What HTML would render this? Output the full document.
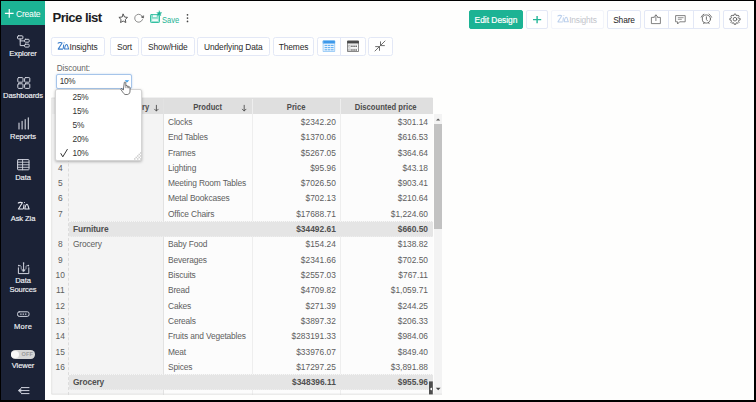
<!DOCTYPE html>
<html><head><meta charset="utf-8">
<style>
*{box-sizing:border-box;margin:0;padding:0}
html,body{width:756px;height:402px;overflow:hidden;background:#000}
body{font-family:"Liberation Sans",sans-serif;position:relative;color:#333}
#app{position:absolute;left:1px;top:1px;width:753px;height:399px;background:#fefefd;overflow:hidden}
#side{position:absolute;left:0;top:0;width:44px;height:399px;background:#1b2236}
#create{position:absolute;left:0;top:0;width:44px;height:24px;background:#1cb394;color:#fff;font-size:8.6px;line-height:24px}
.sl{position:absolute;left:0;width:44px;text-align:center;color:#f4f5f8;font-size:8.1px;line-height:10px;letter-spacing:-0.1px;-webkit-text-stroke:0.15px #f4f5f8;transform:scaleX(.935)}
.abs{position:absolute}
.btn{position:absolute;top:36px;height:18.5px;border:1px solid #e3e8f6;border-radius:2.5px;background:#fff;font-size:8.4px;line-height:18.5px;text-align:center;color:#2a2a2a;letter-spacing:-0.1px;white-space:nowrap}
.tb{position:absolute;top:9px;height:18.5px;border:1px solid #e3e8f6;border-radius:2px;background:#fff;font-size:8.4px;line-height:19px;text-align:center;color:#222;white-space:nowrap;letter-spacing:-0.15px}
.t{position:absolute;font-size:8.4px;line-height:10px;height:10px;color:#5e5e5e;white-space:nowrap;letter-spacing:-0.15px}
.t.n{left:51px;width:16.5px;text-align:center;letter-spacing:0}
.t.r{text-align:right;letter-spacing:0}
.t.b{font-weight:bold;color:#505050}
.sub{position:absolute;left:68px;width:363.5px;height:16.2px;background:#e5e5e5;border-top:1px dotted rgba(255,255,255,.7);border-bottom:1px dotted rgba(255,255,255,.35)}
.h{position:absolute;top:98.8px;height:15.5px;line-height:15.5px;font-size:8.3px;font-weight:bold;color:#4c4c4c;text-align:center}
.h span{display:inline-block;transform:scaleX(.92)}
.opt{position:absolute;left:71.6px;font-size:8.3px;color:#333;line-height:12px;letter-spacing:-0.3px}
</style></head><body>
<div id="app">
 <div id="side">
  <div id="create"><svg class="abs" style="left:0;top:0" width="44" height="24" viewBox="1 1 44 24"><path d="M4.9 13.4h8.7M9.25 9v8.8" stroke="#fff" stroke-width="1.15" fill="none"/></svg><span class="abs" style="left:15px;top:1px;letter-spacing:-0.25px">Create</span></div>
  
  <svg class="abs" style="left:0;top:0" width="44" height="399" viewBox="1 1 44 399" fill="none" stroke="#d3d6e0" stroke-width="1" stroke-linecap="round" stroke-linejoin="round">
   <!-- explorer -->
   <rect x="17.5" y="35.8" width="5.4" height="3.1" rx="0.9"/>
   <path d="M20.2 39v6.6h4.2M20.2 40.9h4.2"/>
   <rect x="24.6" y="39.3" width="4.6" height="2.9" rx="0.9"/>
   <rect x="24.6" y="44.2" width="4.6" height="2.9" rx="0.9"/>
   <!-- dashboards -->
   <rect x="17.8" y="77.6" width="5.2" height="4.6" rx="0.9"/>
   <rect x="24.6" y="77.6" width="5.2" height="4.6" rx="0.9"/>
   <rect x="17.8" y="83.800" width="5.2" height="4.6" rx="0.9"/>
   <rect x="24.6" y="83.800" width="5.2" height="4.6" rx="0.9"/>
   <!-- reports -->
   <path d="M19 123v6M22.1 121.2v7.8M25.2 119.6v9.4M28.3 117.8v11.2" stroke-width="1.1"/>
   <!-- data -->
   <rect x="17.6" y="159.6" width="11.4" height="10.2" rx="0.6"/>
   <path d="M17.6 162.2h11.4M17.6 164.8h11.4M17.6 167.3h11.4M22.6 159.6v10.2" stroke-width="0.9"/>
   <!-- ask zia -->
   <g stroke="#e6e8ef" color="#e6e8ef" stroke-width="1.1" transform="translate(17.9,202) scale(1.02)"><path d="M0.4 1C1.2 0.2 3.6 0.2 4.4 0.8L0.5 6.9H4.9"/><path d="M5.95 2.7L5.55 6.3"/><circle cx="6.45" cy="0.55" r="0.55" fill="currentColor" stroke="none"/><path d="M6.8 6.8C7.2 4.2 8.1 2.2 9 2.2C10 2.2 10 5 11 6.8Z"/></g>
   <!-- data sources -->
   <path d="M18.400 267.800v5.800h10.400v-5.800"/>
   <path d="M23.600 263.400v7"/>
   <path d="M21.900 269.700h3.400l-1.700 2.100z" fill="#d3d6e0" stroke-width="0.5"/>
   <path d="M19 265.700h1.100c.9 0 1.100.5 1.100 1.400v1.700M28.200 265.700h-1.100c-.9 0-1.100.5-1.100 1.400v1.700" stroke-width="0.8" stroke="#b9bdc9"/>
   <circle cx="18.800" cy="265.600" r="0.800" fill="#d3d6e0" stroke="none"/><circle cx="28.400" cy="265.600" r="0.800" fill="#d3d6e0" stroke="none"/><circle cx="23.600" cy="263" r="0.800" fill="#d3d6e0" stroke="none"/>
   <!-- more -->
   <rect x="17.6" y="311.8" width="11.4" height="4.6" rx="1.6"/>
   <path d="M20.6 314.1h0.6M23 314.1h0.6M25.4 314.1h0.6" stroke-width="1.1"/>
   <!-- collapse -->
   <path d="M21.4 387.6h7.6M20.4 390.6h8.6M21.4 393.6h7.6" stroke-width="1"/>
   <path d="M20.6 388.6l-2.4 2l2.4 2z" fill="#d3d6e0" stroke-width="0.6"/>
  </svg>
  <div class="abs" style="left:9.6px;top:349.4px;width:24.6px;height:8.4px;border-radius:4.2px;background:#d5d5d5"></div>
  <div class="abs" style="left:10.2px;top:349.9px;width:7.4px;height:7.4px;border-radius:50%;background:#f8f8f8"></div>
  <div class="abs" style="left:20.5px;top:350.4px;font-size:5.6px;line-height:7px;color:#9a9a9a;font-weight:bold;letter-spacing:0.1px">OFF</div>
  <div class="sl" style="top:48.4px">Explorer</div>
  <div class="sl" style="top:89.5px">Dashboards</div>
  <div class="sl" style="top:130.5px">Reports</div>
  <div class="sl" style="top:171.6px">Data</div>
  <div class="sl" style="top:212.7px">Ask Zia</div>
  <div class="sl" style="top:274.8px;line-height:9px">Data<br>Sources</div>
  <div class="sl" style="top:320.6px;letter-spacing:0.25px">More</div>
  <div class="sl" style="top:360px">Viewer</div>
 </div>

 <!-- title bar -->
 <div class="abs" style="left:51.5px;top:7.6px;font-size:13.2px;font-weight:bold;color:#1d1d1f;line-height:18px;letter-spacing:-0.58px">Price list</div>
 <div class="abs" style="left:161.400px;top:13.6px;font-size:8.8px;color:#1cb394;line-height:10px;transform:scaleX(.86);transform-origin:left">Save</div>

 <div class="tb" style="left:468px;width:54px;background:#1cb394;border-color:#1cb394;color:#fff;-webkit-text-stroke:0.2px #fff;letter-spacing:0">Edit Design</div>
 <div class="tb" style="left:525px;width:22px"><svg class="abs" style="left:0;top:0" width="20" height="17" viewBox="0 0 20 17"><path d="M6 8.600h8.200M10.100 4.900v7.400" stroke="#23b697" stroke-width="1.4" fill="none"/></svg></div>
 <div class="tb" style="left:550px;width:53px;color:#c2c4cb;border-color:#f3f5fb"><span style="padding-left:11px">Insights</span></div>
 <div class="tb" style="left:606px;width:34px">Share</div>
 <div class="tb" style="left:643px;width:76px"></div>
 <div class="abs" style="left:667px;top:10px;width:1px;height:16.5px;background:#e3e8f6"></div>
 <div class="abs" style="left:692px;top:10px;width:1px;height:16.5px;background:#e3e8f6"></div>
 <div class="tb" style="left:722px;width:24.5px"></div>

 <!-- toolbar -->
 <div class="btn" style="left:50px;width:53.5px"><span style="padding-left:11.5px">Insights</span></div>
 <div class="btn" style="left:108.9px;width:29.1px">Sort</div>
 <div class="btn" style="left:139.8px;width:54.2px">Show/Hide</div>
 <div class="btn" style="left:195.8px;width:73px">Underlying Data</div>
 <div class="btn" style="left:272px;width:41px">Themes</div>
 <div class="btn" style="left:316px;width:48.5px"></div>
 <div class="abs" style="left:339px;top:37px;width:1px;height:16.5px;background:#e3e8f6"></div>
 <div class="btn" style="left:367px;width:24.5px"></div>


 <!-- main icons overlay: viewBox in page coords -->
 <svg class="abs" style="left:0;top:0;pointer-events:none" width="753" height="60" viewBox="1 1 753 60" fill="none" stroke-linecap="round" stroke-linejoin="round">
  <!-- star -->
  <path d="M123.2 14.2l1.3 2.8l3 .4l-2.2 2.1l.55 3l-2.65-1.45l-2.65 1.45l.55-3l-2.2-2.1l3-.4z" stroke="#444" stroke-width="0.9"/>
  <!-- refresh -->
  <path d="M142.500 19.600a4 4 0 1 1 .1-2.400" stroke="#6a6a6a" stroke-width="0.75"/>
  <path d="M143.700 15.900l-.2 2.200l-2-.9z" fill="#444" stroke="#444" stroke-width="0.4"/>
  <!-- save -->
  <rect x="150.500" y="14.500" width="9" height="8" rx="0.8" fill="#9be3d3" stroke="#35c0a2" stroke-width="1"/>
  <rect x="152.700" y="14.900" width="4.400" height="2.500" fill="#fff" stroke="#4fc9af" stroke-width="0.5"/>
  <rect x="152.200" y="19.300" width="5.700" height="1.600" fill="#fff"/>
  <path d="M159.30 10.70L160.01 12.53L161.96 12.63L160.44 13.87L160.95 15.77L159.30 14.70L157.65 15.77L158.16 13.87L156.64 12.63L158.59 12.53z" fill="#1cb394" stroke="#1cb394" stroke-width="0.3" stroke-linejoin="round"/>
  <!-- kebab -->
  <g fill="#444"><circle cx="187.5" cy="14.8" r="0.85"/><circle cx="187.5" cy="18.1" r="0.85"/><circle cx="187.5" cy="21.4" r="0.85"/></g>

  <!-- zia (toolbar, blue) -->
  <g stroke="#3a7dca" color="#3a7dca" stroke-width="1.05" transform="translate(57.7,42.2)"><path d="M0.4 1C1.2 0.2 3.6 0.2 4.4 0.8L0.5 6.9H4.9"/><path d="M5.95 2.7L5.55 6.3"/><circle cx="6.45" cy="0.55" r="0.55" fill="currentColor" stroke="none"/><path d="M6.8 6.8C7.2 4.2 8.1 2.2 9 2.2C10 2.2 10 5 11 6.8Z"/></g>
  <!-- zia (top right, disabled) -->
  <g stroke="#bcd0ec" color="#bcd0ec" stroke-width="1.05" transform="translate(557.4,15)"><path d="M0.4 1C1.2 0.2 3.6 0.2 4.4 0.8L0.5 6.9H4.9"/><path d="M5.95 2.7L5.55 6.3"/><circle cx="6.45" cy="0.55" r="0.55" fill="currentColor" stroke="none"/><path d="M6.8 6.8C7.2 4.2 8.1 2.2 9 2.2C10 2.2 10 5 11 6.8Z"/></g>

  <!-- blue table icon -->
  <rect x="323.5" y="40.9" width="11.2" height="10.600" fill="#e9f4fe" stroke="#6ab2f1" stroke-width="0.6"/>
  <rect x="323.5" y="40.9" width="11.2" height="2.300" fill="#3d99ea" stroke="#3d99ea" stroke-width="0.6"/>
  <g stroke="#4aa3ee" stroke-width="0.9"><path d="M325 45.4h1.8M328.2 45.4h1.8M331.4 45.4h1.8M325 47.6h1.8M328.2 47.6h1.8M331.4 47.6h1.8M325 49.8h1.8M328.2 49.8h1.8M331.4 49.8h1.8"/></g>
  <!-- dark table icon -->
  <rect x="347.9" y="41.1" width="10.6" height="10.4" fill="#fff" stroke="#555" stroke-width="0.7"/>
  <rect x="347.9" y="41.1" width="10.6" height="2" fill="#484848" stroke="#484848" stroke-width="0.7"/>
  <g stroke="#4a4a4a" stroke-width="1.5" stroke-linecap="butt"><path d="M351.300 46.300h1.300M353.400 46.300h1.300M355.500 46.300h1.300M351.300 50h1.300M353.400 50h1.300M355.500 50h1.300"/></g>
  <path d="M347.9 48.200h10.600M347.900 44.400h10.600" stroke="#bbb" stroke-width="0.4"/>
  <rect x="348.700" y="45.500" width="1.600" height="1.600" fill="#fff" stroke="#777" stroke-width="0.45"/>
  <rect x="348.700" y="49.200" width="1.600" height="1.600" fill="#fff" stroke="#777" stroke-width="0.45"/>
  <!-- collapse arrows -->
  <g stroke="#4a4a4a" stroke-width="0.8"><path d="M385 41l-4.400 4.400M380.500 41.800v3.800h3.900M375 51l4.400-4.400M379.500 50.400v-3.800h-3.900"/></g>

  <!-- export -->
  <g stroke="#636363" stroke-width="0.8"><path d="M654.2 17.4h-2.8v6.2h9v-6.2h-2.8M655.9 20.6v-5.6M654.2 16.6l1.7-1.7l1.7 1.7"/></g>
  <!-- comment -->
  <g stroke="#636363" stroke-width="0.8"><path d="M676 15.600h9.200v6.200h-5.600l-2 2.200v-2.200h-1.600z"/><path d="M678.200 17.700h5M678.200 19.300h3.200" stroke-width="0.9" stroke="#8a8a8a"/></g>
  <!-- alarm -->
  <g stroke="#5a5a5a" stroke-width="0.85"><circle cx="706.4" cy="19.0" r="4.1"/><path d="M706.4 16.800v2.700l.9 1.100"/><path d="M701.23 17.12A5.5 5.5 0 0 1 703.82 14.14M708.98 14.14A5.5 5.5 0 0 1 711.57 17.12"/><path d="M704.23 22.48L703.70 23.68M708.57 22.48L709.10 23.68"/></g>
  <!-- gear -->
  <g stroke="#5a5a5a" stroke-width="0.85">
   <circle cx="735.0" cy="19.2" r="1.8"/>
   <path d="M738.88 18.24L740.13 18.35L740.13 20.05L738.88 20.16L738.43 21.26L739.23 22.22L738.02 23.43L737.06 22.63L735.96 23.08L735.85 24.33L734.15 24.33L734.04 23.08L732.94 22.63L731.98 23.43L730.77 22.22L731.57 21.26L731.12 20.16L729.87 20.05L729.87 18.35L731.12 18.24L731.57 17.14L730.77 16.18L731.98 14.97L732.94 15.77L734.04 15.32L734.15 14.07L735.85 14.07L735.96 15.32L737.06 15.77L738.02 14.97L739.23 16.18L738.43 17.14z"/>
  </g>
 </svg>

 <!-- filter -->
 <div class="abs" style="left:55.8px;top:63px;font-size:8.2px;color:#666;line-height:10px;letter-spacing:-0.1px">Discount:</div>

 <!-- table -->
 <div class="abs" style="left:50.6px;top:96.8px;width:381px;height:16.4px;background:#dfdfdf"></div>
 <div class="abs" style="left:50.6px;top:96.8px;width:17px;height:16.4px;background:#ececec"></div>
 <div class="abs" style="left:50.6px;top:113px;width:112.4px;height:280px;background:#f4f4f4"></div>
 <div class="abs" style="left:163px;top:113px;width:268.6px;height:280px;background:#fcfcfc"></div>
 <div class="abs" style="left:67px;top:97.5px;width:0;height:296px;border-left:1px dashed #dcdcdc"></div>
 <div class="abs" style="left:162.4px;top:97.5px;width:1px;height:296px;background:#e2e2e2"></div>
 <div class="abs" style="left:251px;top:97.5px;width:1px;height:296px;background:#eeeeee"></div>
 <div class="abs" style="left:339px;top:97.5px;width:1px;height:296px;background:#eeeeee"></div>
 <div class="abs" style="left:433px;top:113.3px;width:8.4px;height:280px;background:#f3f3f3"></div>
 <div class="abs" style="left:433px;top:123px;width:7.6px;height:105.400px;background:#c2c2c2"></div>

 <div class="h" style="left:163px;width:88px"><span>Product</span></div>
 <div class="h" style="left:251px;width:88px"><span>Price</span></div>
 <div class="h" style="left:339px;width:92px"><span>Discounted price</span></div>
 <div class="h" style="left:140.5px;width:20px;text-align:left"><span style="transform-origin:left">ry</span></div>
<div class="t n" style="top:116px">1</div>
<div class="t" style="left:167px;top:116px">Clocks</div>
<div class="t r" style="left:251px;width:83.8px;top:116px">$2342.20</div>
<div class="t r" style="left:339px;width:88px;top:116px">$301.14</div>
<div class="t n" style="top:131px">2</div>
<div class="t" style="left:167px;top:131px">End Tables</div>
<div class="t r" style="left:251px;width:83.8px;top:131px">$1370.06</div>
<div class="t r" style="left:339px;width:88px;top:131px">$616.53</div>
<div class="t n" style="top:147px">3</div>
<div class="t" style="left:167px;top:147px">Frames</div>
<div class="t r" style="left:251px;width:83.8px;top:147px">$5267.05</div>
<div class="t r" style="left:339px;width:88px;top:147px">$364.64</div>
<div class="t n" style="top:162px">4</div>
<div class="t" style="left:167px;top:162px">Lighting</div>
<div class="t r" style="left:251px;width:83.8px;top:162px">$95.96</div>
<div class="t r" style="left:339px;width:88px;top:162px">$43.18</div>
<div class="t n" style="top:177px">5</div>
<div class="t" style="left:167px;top:177px">Meeting Room Tables</div>
<div class="t r" style="left:251px;width:83.8px;top:177px">$7026.50</div>
<div class="t r" style="left:339px;width:88px;top:177px">$903.41</div>
<div class="t n" style="top:192px">6</div>
<div class="t" style="left:167px;top:192px">Metal Bookcases</div>
<div class="t r" style="left:251px;width:83.8px;top:192px">$702.13</div>
<div class="t r" style="left:339px;width:88px;top:192px">$210.64</div>
<div class="t n" style="top:208px">7</div>
<div class="t" style="left:167px;top:208px">Office Chairs</div>
<div class="t r" style="left:251px;width:83.8px;top:208px">$17688.71</div>
<div class="t r" style="left:339px;width:88px;top:208px">$1,224.60</div>
<div class="sub" style="top:219.88px"></div>
<div class="t b" style="left:72px;top:223px">Furniture</div>
<div class="t b r" style="left:251px;width:83.8px;top:223px">$34492.61</div>
<div class="t b r" style="left:339px;width:88px;top:223px">$660.50</div>
<div class="t n" style="top:238px">8</div>
<div class="t" style="left:72px;top:238px">Grocery</div>
<div class="t" style="left:167px;top:238px">Baby Food</div>
<div class="t r" style="left:251px;width:83.8px;top:238px">$154.24</div>
<div class="t r" style="left:339px;width:88px;top:238px">$138.82</div>
<div class="t n" style="top:254px">9</div>
<div class="t" style="left:167px;top:254px">Beverages</div>
<div class="t r" style="left:251px;width:83.8px;top:254px">$2341.66</div>
<div class="t r" style="left:339px;width:88px;top:254px">$702.50</div>
<div class="t n" style="top:269px">10</div>
<div class="t" style="left:167px;top:269px">Biscuits</div>
<div class="t r" style="left:251px;width:83.8px;top:269px">$2557.03</div>
<div class="t r" style="left:339px;width:88px;top:269px">$767.11</div>
<div class="t n" style="top:284px">11</div>
<div class="t" style="left:167px;top:284px">Bread</div>
<div class="t r" style="left:251px;width:83.8px;top:284px">$4709.82</div>
<div class="t r" style="left:339px;width:88px;top:284px">$1,059.71</div>
<div class="t n" style="top:300px">12</div>
<div class="t" style="left:167px;top:300px">Cakes</div>
<div class="t r" style="left:251px;width:83.8px;top:300px">$271.39</div>
<div class="t r" style="left:339px;width:88px;top:300px">$244.25</div>
<div class="t n" style="top:315px">13</div>
<div class="t" style="left:167px;top:315px">Cereals</div>
<div class="t r" style="left:251px;width:83.8px;top:315px">$3897.32</div>
<div class="t r" style="left:339px;width:88px;top:315px">$206.33</div>
<div class="t n" style="top:330px">14</div>
<div class="t" style="left:167px;top:330px">Fruits and Vegetables</div>
<div class="t r" style="left:251px;width:83.8px;top:330px">$283191.33</div>
<div class="t r" style="left:339px;width:88px;top:330px">$984.06</div>
<div class="t n" style="top:346px">15</div>
<div class="t" style="left:167px;top:346px">Meat</div>
<div class="t r" style="left:251px;width:83.8px;top:346px">$33976.07</div>
<div class="t r" style="left:339px;width:88px;top:346px">$849.40</div>
<div class="t n" style="top:361px">16</div>
<div class="t" style="left:167px;top:361px">Spices</div>
<div class="t r" style="left:251px;width:83.8px;top:361px">$17297.25</div>
<div class="t r" style="left:339px;width:88px;top:361px">$3,891.88</div>
<div class="sub" style="top:373.28px"></div>
<div class="t b" style="left:72px;top:376px">Grocery</div>
<div class="t b r" style="left:251px;width:83.8px;top:376px">$348396.11</div>
<div class="t b r" style="left:339px;width:88px;top:376px">$955.96</div>

 <!-- table borders & arrows -->
 <svg class="abs" style="left:0;top:90px" width="460" height="309" viewBox="1 91 460 309" fill="none">
  <path d="M51.7 98v296M51.5 394.200h390.500M51.500 98h381" stroke="#dcdcdc" stroke-width="0.8"/>
  <!-- sort arrows -->
  <g stroke="#444" stroke-width="0.85" stroke-linecap="round" stroke-linejoin="round">
   <path d="M156.400 105.300v5.600M154.600 109.200l1.800 1.800l1.800-1.800"/>
   <path d="M244.200 105.300v5.600M242.400 109.200l1.800 1.800l1.800-1.800"/>
  </g>
  <!-- scrollbar arrows -->
  <path d="M436 120.600l2.100-2.200l2.100 2.200z" fill="#555"/>
  <path d="M435.800 387.800h4.800l-2.400 2.500z" fill="#444"/>
  <!-- dark handle -->
  <rect x="429" y="381.400" width="3.800" height="13" fill="#4d4d4d"/>
  <path d="M432 387.400v3.200l-2.200-1.600z" fill="#fff"/>
 </svg>
 <!-- select + dropdown -->
 <div class="abs" style="left:55.2px;top:73px;width:76px;height:14.9px;border:1px solid #a6c5ea;border-radius:2px;background:#fff;box-shadow:0 0 2px rgba(120,170,230,.5);font-size:8.2px;line-height:14.4px;padding-left:2.5px;color:#333;letter-spacing:-0.3px">10%</div>
 <svg class="abs" style="left:120px;top:76px" width="14" height="10" viewBox="0 0 14 10"><path d="M3.7 3.3h4.6l-2.3 2.1z" fill="#3c9ee8"/></svg>
 <div class="abs" style="left:54.3px;top:87.6px;width:87px;height:72.4px;background:#fff;border:1px solid #d4d4d4;border-radius:2px;box-shadow:0 1px 3px rgba(0,0,0,.28)"></div>
 <div class="opt" style="top:90.2px">25%</div>
 <div class="opt" style="top:104.2px">15%</div>
 <div class="opt" style="top:118.2px">5%</div>
 <div class="opt" style="top:132.2px">20%</div>
 <div class="opt" style="top:146.2px">10%</div>
 <svg class="abs" style="left:0;top:60px" width="200" height="110" viewBox="1 61 200 110" fill="none">
  <!-- check -->
  <path d="M60.9 153.6l1.9 3.2l4.5-7.4" stroke="#2b2b2b" stroke-width="0.95" stroke-linecap="round" stroke-linejoin="round"/>
  <!-- grip -->
  <g fill="#cfcfcf">
   <rect x="140" y="152.2" width="1.5" height="1.5"/>
   <rect x="138.5" y="153.7" width="1.5" height="1.5"/>
   <rect x="137" y="155.2" width="1.5" height="1.5"/><rect x="140" y="155.2" width="1.5" height="1.5"/>
   <rect x="135.5" y="156.7" width="1.5" height="1.5"/><rect x="138.5" y="156.7" width="1.5" height="1.5"/>
   <rect x="134" y="158.2" width="1.5" height="1.5"/><rect x="137" y="158.2" width="1.5" height="1.5"/><rect x="140" y="158.2" width="1.5" height="1.5"/>
  </g>
  <!-- hand cursor -->
  <path d="M124.3 82.6c0-.9 1.5-.9 1.5 0v3.3c.2-.7 1.5-.6 1.5.1v.5c.3-.6 1.4-.5 1.4.2v.5c.3-.5 1.3-.4 1.3.3v3.6c0 1.7-.8 3-2.300 3.400h-2.600c-.9-.300-1.700-1.400-2.600-2.700l-1.500-2.200c-.5-.8.5-1.400 1.100-.8l1.200 1.300z" fill="#fff" stroke="#3a3a3a" stroke-width="0.7" stroke-linejoin="round"/>
  <path d="M125.800 85.900v2.200M127.300 86.500v1.700M128.700 87v1.300" stroke="#555" stroke-width="0.6"/>
 </svg>

</div>
</body></html>
